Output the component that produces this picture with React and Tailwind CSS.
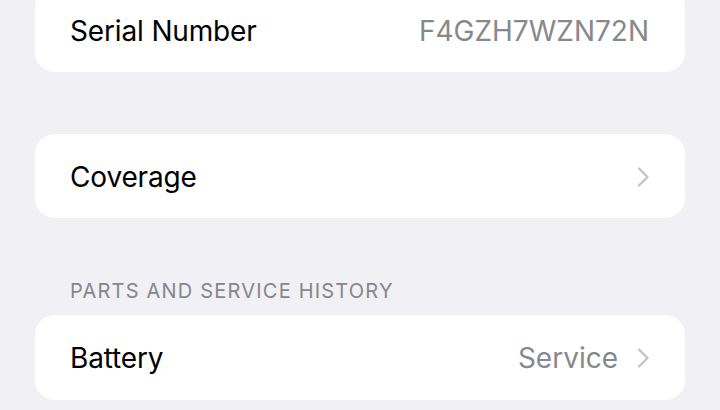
import React from "react";

const font = { fontFamily: "Inter, 'Noto Sans', 'Liberation Sans', sans-serif" };

function Chevron() {
  return (
    <svg width="14" height="22" viewBox="0 0 14 22" className="shrink-0">
      <path d="M3 2.5 L11.5 11 L3 19.5" fill="none" stroke="#c4c4c8" strokeWidth="2.4" strokeLinecap="round" strokeLinejoin="round" />
    </svg>
  );
}

export default function App() {
  return (
    <div className="w-[720px] h-[410px] overflow-hidden bg-[#f1f0f5] px-[35px]" style={font}>
      <div className="-mt-[13px] h-[85px] pt-[3px] bg-white rounded-[20px] flex items-center justify-between pl-[35px] pr-[36px]">
        <span className="text-[28px] text-black tracking-[-0.15px]">Serial Number</span>
        <span className="text-[28px] text-[#88888c]">F4GZH7WZN72N</span>
      </div>
      <div className="mt-[62px] h-[84px] pt-[2px] bg-white rounded-[20px] flex items-center justify-between pl-[35px] pr-[35px]">
        <span className="text-[28px] text-black tracking-[-0.15px]">Coverage</span>
        <Chevron />
      </div>
      <div className="mt-[63px] pl-[35px] text-[20px] text-[#86868b] leading-none h-[34px] tracking-[1.2px]">PARTS AND SERVICE HISTORY</div>
      <div className="h-[85px] bg-white rounded-[20px] flex items-center justify-between pl-[35px] pr-[35px]">
        <span className="text-[28px] text-black tracking-[-0.15px]">Battery</span>
        <div className="flex items-center gap-[18px]">
          <span className="text-[28px] text-[#88888c]">Service</span>
          <Chevron />
        </div>
      </div>
    </div>
  );
}
